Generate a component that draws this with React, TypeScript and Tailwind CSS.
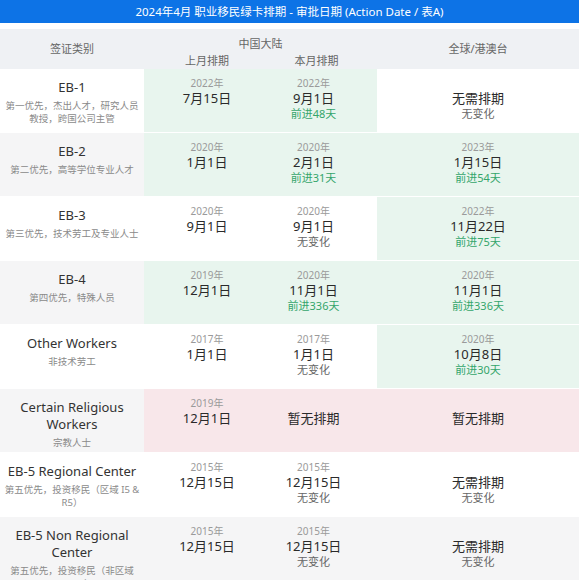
import React from 'react';

type Cell = {
  year?: string;
  date?: string;
  note?: string;
  bg: string;
};

type Row = {
  title: React.ReactNode;
  sub: React.ReactNode;
  titleBg: string;
  prev: Cell;
  cur: Cell;
  global: Cell;
};

const W = 'bg-white';
const G = 'bg-[#f5f5f6]';
const GR = 'bg-[#e8f5ee]';
const PK = 'bg-[#f8e7ea]';

const rows: Row[] = [
  {
    title: 'EB-1',
    sub: <>第一优先，杰出人才，研究人员<br />教授，跨国公司主管</>,
    titleBg: W,
    prev: { year: '2022年', date: '7月15日', bg: GR },
    cur: { year: '2022年', date: '9月1日', note: '前进48天', bg: GR },
    global: { date: '无需排期', note: '无变化', bg: W },
  },
  {
    title: 'EB-2',
    sub: '第二优先，高等学位专业人才',
    titleBg: G,
    prev: { year: '2020年', date: '1月1日', bg: GR },
    cur: { year: '2020年', date: '2月1日', note: '前进31天', bg: GR },
    global: { year: '2023年', date: '1月15日', note: '前进54天', bg: GR },
  },
  {
    title: 'EB-3',
    sub: '第三优先，技术劳工及专业人士',
    titleBg: W,
    prev: { year: '2020年', date: '9月1日', bg: W },
    cur: { year: '2020年', date: '9月1日', note: '无变化', bg: W },
    global: { year: '2022年', date: '11月22日', note: '前进75天', bg: GR },
  },
  {
    title: 'EB-4',
    sub: '第四优先，特殊人员',
    titleBg: G,
    prev: { year: '2019年', date: '12月1日', bg: GR },
    cur: { year: '2020年', date: '11月1日', note: '前进336天', bg: GR },
    global: { year: '2020年', date: '11月1日', note: '前进336天', bg: GR },
  },
  {
    title: 'Other Workers',
    sub: '非技术劳工',
    titleBg: W,
    prev: { year: '2017年', date: '1月1日', bg: W },
    cur: { year: '2017年', date: '1月1日', note: '无变化', bg: W },
    global: { year: '2020年', date: '10月8日', note: '前进30天', bg: GR },
  },
  {
    title: <>Certain Religious<br />Workers</>,
    sub: '宗教人士',
    titleBg: G,
    prev: { year: '2019年', date: '12月1日', bg: PK },
    cur: { date: '暂无排期', bg: PK },
    global: { date: '暂无排期', bg: PK },
  },
  {
    title: 'EB-5 Regional Center',
    sub: <>第五优先，投资移民（区域 I5 &amp;<br />R5）</>,
    titleBg: W,
    prev: { year: '2015年', date: '12月15日', bg: W },
    cur: { year: '2015年', date: '12月15日', note: '无变化', bg: W },
    global: { date: '无需排期', note: '无变化', bg: W },
  },
  {
    title: <>EB-5 Non Regional<br />Center</>,
    sub: <>第五优先，投资移民（非区域<br />C5 &amp; T5）</>,
    titleBg: G,
    prev: { year: '2015年', date: '12月15日', bg: G },
    cur: { year: '2015年', date: '12月15日', note: '无变化', bg: G },
    global: { date: '无需排期', note: '无变化', bg: G },
  },
];

function DateCell({ cell, extra }: { cell: Cell; extra?: string }) {
  const green = cell.note && cell.note.startsWith('前进');
  return (
    <div className={`${cell.bg} ${extra ?? ''} flex flex-col items-center pt-[8px] border-b border-white`}>
      <div className="h-[13px] text-[10px] leading-[13px] text-[#9a9a9a]">{cell.year ?? ''}</div>
      <div className="text-[13px] leading-[16px] text-[#2a2a2a]">{cell.date}</div>
      {cell.note && (
        <div className={`text-[11px] leading-[15px] ${green ? 'text-[#34a56b]' : 'text-[#666]'}`}>{cell.note}</div>
      )}
    </div>
  );
}

export default function App() {
  return (
    <div
      className="w-[579px] bg-white"
      style={{ fontFamily: '"Noto Sans", "Noto Sans CJK SC", sans-serif' }}
    >
      <div className="h-[23px] bg-[#0d73e6] text-white text-[11.5px] flex items-center justify-center">
        2024年4月 职业移民绿卡排期 - 审批日期 (Action Date / 表A)
      </div>
      <div className="mt-[6px] h-[40px] bg-[#eff1f4] grid grid-cols-[144px_126px_107px_1fr] text-[11px] text-[#666]">
        <div className="flex items-center justify-center">签证类别</div>
        <div className="col-span-2 relative">
          <div className="absolute left-0 right-0 top-[7px] text-center">中国大陆</div>
          <div className="absolute left-0 w-[126px] top-[24px] text-center">上月排期</div>
          <div className="absolute left-[126px] w-[107px] top-[24px] text-center pr-[14px]">本月排期</div>
        </div>
        <div className="flex items-center justify-center">全球/港澳台</div>
      </div>
      {rows.map((r, i) => (
        <div
          key={i}
          className={`grid grid-cols-[144px_126px_107px_1fr] ${i === rows.length - 1 ? 'min-h-[70px]' : 'h-[64px]'}`}
        >
          <div className={`${r.titleBg} flex flex-col items-center text-center pt-[10px] px-1 border-b border-white`}>
            <div className="text-[13px] leading-[17px] text-[#333]">{r.title}</div>
            <div className="text-[9.5px] leading-[13px] text-[#8a8a8a] mt-[3px]">{r.sub}</div>
          </div>
          <DateCell cell={r.prev} />
          <DateCell cell={r.cur} extra="pr-[20px]" />
          <DateCell cell={r.global} />
        </div>
      ))}
    </div>
  );
}
